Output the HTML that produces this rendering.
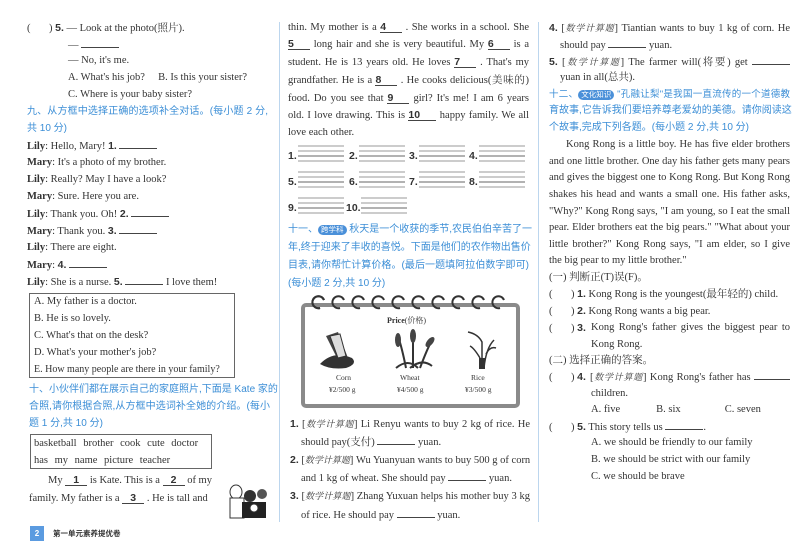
<!DOCTYPE html>
<html><head><meta charset="utf-8"><style>
*{margin:0;padding:0;box-sizing:border-box}
body{width:800px;height:548px;background:#fff;position:relative;overflow:hidden;font-family:"Liberation Serif","Noto Serif CJK SC",serif;color:#333;font-size:10.5px}
.l{position:absolute;white-space:nowrap;line-height:12px}
.j{text-align:justify;text-align-last:justify}
.b{color:#3b8ed6;font-family:"Liberation Sans","Noto Sans CJK SC",sans-serif;font-size:10px;text-align:justify;text-align-last:justify}
.n{font-family:"Liberation Sans",sans-serif;font-weight:bold}
.u{display:inline-block;border-bottom:1px solid #444;height:9px;vertical-align:baseline}
.a{display:inline-block;border-bottom:1px solid #444;text-align:center;font-family:"Liberation Sans",sans-serif;font-weight:bold;line-height:10px}
.tag{display:inline-block;background:#4a90d9;color:#fff;border-radius:5px;font-size:7.5px;padding:0 3px;line-height:10px}
.k{font-family:"Noto Serif CJK SC",serif;font-style:italic;font-size:9px}
.p{display:inline-block;width:22px}
.vl{position:absolute;top:22px;height:500px;width:1px;background:#bcd6ee}
</style></head><body>
<div class="vl" style="left:279px"></div>
<div class="vl" style="left:538px"></div>

<!-- column 1 -->
<div class="l" style="left:27px;top:22px"><span class="p">(</span>) <span class="n">5.</span> — Look at the photo(照片).</div>
<div class="l" style="left:68px;top:39px">— <span class="u" style="width:38px"></span></div>
<div class="l" style="left:68px;top:55px">— No, it's me.</div>
<div class="l" style="left:68px;top:72px">A. What's his job?&nbsp;&nbsp;&nbsp;&nbsp;&nbsp;B. Is this your sister?</div>
<div class="l" style="left:68px;top:89px">C. Where is your baby sister?</div>
<div class="l b" style="left:27px;top:106px;width:241px">九、从方框中选择正确的选项补全对话。(每小题 2 分,</div>
<div class="l b" style="left:27px;top:123px;text-align-last:auto">共 10 分)</div>
<div class="l" style="left:27px;top:140px"><b>Lily</b>: Hello, Mary! <span class="n">1.</span> <span class="u" style="width:38px"></span></div>
<div class="l" style="left:27px;top:157px"><b>Mary</b>: It's a photo of my brother.</div>
<div class="l" style="left:27px;top:174px"><b>Lily</b>: Really? May I have a look?</div>
<div class="l" style="left:27px;top:191px"><b>Mary</b>: Sure. Here you are.</div>
<div class="l" style="left:27px;top:208px"><b>Lily</b>: Thank you. Oh! <span class="n">2.</span> <span class="u" style="width:38px"></span></div>
<div class="l" style="left:27px;top:225px"><b>Mary</b>: Thank you. <span class="n">3.</span> <span class="u" style="width:38px"></span></div>
<div class="l" style="left:27px;top:242px"><b>Lily</b>: There are eight.</div>
<div class="l" style="left:27px;top:259px"><b>Mary</b>: <span class="n">4.</span> <span class="u" style="width:38px"></span></div>
<div class="l" style="left:27px;top:276px"><b>Lily</b>: She is a nurse. <span class="n">5.</span> <span class="u" style="width:38px"></span> I love them!</div>
<div style="position:absolute;left:29px;top:293px;width:206px;height:85px;border:1px solid #666"></div>
<div class="l" style="left:34px;top:296px">A. My father is a doctor.</div>
<div class="l" style="left:34px;top:313px">B. He is so lovely.</div>
<div class="l" style="left:34px;top:330px">C. What's that on the desk?</div>
<div class="l" style="left:34px;top:347px">D. What's your mother's job?</div>
<div class="l" style="left:34px;top:364px;font-size:10px">E. How many people are there in your family?</div>
<div class="l b" style="left:29px;top:384px;width:241px">十、小伙伴们都在展示自己的家庭照片,下面是 Kate 家的</div>
<div class="l b" style="left:29px;top:401px;width:241px">合照,请你根据合照,从方框中选词补全她的介绍。(每小</div>
<div class="l b" style="left:29px;top:418px;text-align-last:auto">题 1 分,共 10 分)</div>
<div style="position:absolute;left:30px;top:434px;width:182px;height:35px;border:1px solid #666"></div>
<div class="l" style="left:34px;top:438px;word-spacing:4px">basketball brother cook cute doctor</div>
<div class="l" style="left:34px;top:455px;word-spacing:4px">has my name picture teacher</div>
<div class="l" style="left:48px;top:475px">My <span class="a" style="width:22px">1</span> is Kate. This is a <span class="a" style="width:22px">2</span> of my</div>
<div class="l" style="left:29px;top:493px">family. My father is a <span class="a" style="width:22px">3</span> . He is tall and</div>
<svg style="position:absolute;left:224px;top:478px" width="48" height="42"><ellipse cx="12" cy="14" rx="6" ry="7" fill="#fff" stroke="#333"/><rect x="6" y="20" width="14" height="20" fill="#fff" stroke="#333"/><ellipse cx="26" cy="18" rx="6" ry="6" fill="#333"/><rect x="18" y="24" width="24" height="16" fill="#222"/><ellipse cx="38" cy="16" rx="5" ry="5" fill="#555"/><ellipse cx="30" cy="30" rx="4" ry="4" fill="#fff" stroke="#333"/></svg>
<div style="position:absolute;left:30px;top:526px;width:14px;height:15px;background:#5b9be0;color:#fff;font:bold 8px 'Liberation Sans';text-align:center;line-height:15px">2</div>
<div class="l" style="left:53px;top:528px;font-family:'Noto Sans CJK SC',sans-serif;font-size:7.5px;font-weight:bold;color:#333">第一单元素养提优卷</div>

<!-- column 2 -->
<div class="l j" style="left:288px;top:22px;width:241px">thin. My mother is a <span class="a" style="width:22px">4</span> . She works in a school. She</div>
<div class="l j" style="left:288px;top:39px;width:241px"><span class="a" style="width:22px">5</span> long hair and she is very beautiful. My <span class="a" style="width:22px">6</span> is a</div>
<div class="l j" style="left:288px;top:57px;width:241px">student. He is 13 years old. He loves <span class="a" style="width:22px">7</span> . That's my</div>
<div class="l j" style="left:288px;top:75px;width:241px">grandfather. He is a <span class="a" style="width:22px">8</span> . He cooks delicious(美味的)</div>
<div class="l j" style="left:288px;top:93px;width:241px">food. Do you see that <span class="a" style="width:22px">9</span> girl? It's me! I am 6 years</div>
<div class="l j" style="left:288px;top:110px;width:241px">old. I love drawing. This is <span class="a" style="width:28px">10</span> happy family. We all</div>
<div class="l" style="left:288px;top:127px">love each other.</div>
<div class="l n" style="left:288px;top:150px">1.</div><div class="l n" style="left:349px;top:150px">2.</div><div class="l n" style="left:409px;top:150px">3.</div><div class="l n" style="left:469px;top:150px">4.</div>
<div class="l n" style="left:288px;top:176px">5.</div><div class="l n" style="left:349px;top:176px">6.</div><div class="l n" style="left:409px;top:176px">7.</div><div class="l n" style="left:469px;top:176px">8.</div>
<div class="l n" style="left:288px;top:202px">9.</div><div class="l n" style="left:346px;top:202px">10.</div>
<svg style="position:absolute;left:298px;top:144px" width="232" height="76" stroke="#777" stroke-width="0.8">
<g id="g"><line x1="0" y1="2" x2="46" y2="2"/><line x1="0" y1="7" x2="46" y2="7"/><line x1="0" y1="12" x2="46" y2="12" stroke="#333"/><line x1="0" y1="17" x2="46" y2="17"/></g>
<use href="#g" x="61"/><use href="#g" x="121"/><use href="#g" x="181"/>
<use href="#g" y="26"/><use href="#g" x="61" y="26"/><use href="#g" x="121" y="26"/><use href="#g" x="181" y="26"/>
<use href="#g" y="52"/><use href="#g" x="63" y="52"/></svg>
<div class="l b" style="left:288px;top:224px;width:241px">十一、<span class="tag">跨学科</span> 秋天是一个收获的季节,农民伯伯辛苦了一</div>
<div class="l b" style="left:288px;top:242px;width:241px">年,终于迎来了丰收的喜悦。下面是他们的农作物出售价</div>
<div class="l b" style="left:288px;top:260px;width:241px">目表,请你帮忙计算价格。(最后一题填阿拉伯数字即可)</div>
<div class="l b" style="left:288px;top:278px;text-align-last:auto">(每小题 2 分,共 10 分)</div>
<div style="position:absolute;left:301px;top:303px;width:219px;height:105px;border:4px solid #8a8a8a;border-radius:5px;background:#fff"></div>
<svg style="position:absolute;left:310px;top:295px" width="200" height="18" fill="none" stroke="#333" stroke-width="2">
<g id="r"><path d="M10 13 A6 6 0 1 1 14 5"/></g>
<use href="#r" x="0"/><use href="#r" x="20"/><use href="#r" x="40"/><use href="#r" x="60"/><use href="#r" x="80"/><use href="#r" x="100"/><use href="#r" x="120"/><use href="#r" x="140"/><use href="#r" x="160"/><use href="#r" x="180"/></svg>
<div class="l" style="left:387px;top:315px;font-size:8px"><b>Price</b>(价格)</div>
<svg style="position:absolute;left:318px;top:328px" width="190" height="42">
<path d="M8 8 L20 4 L30 30 L22 36 Z" fill="#444"/><path d="M2 36 Q15 22 34 30 Q40 36 28 40 Q12 42 2 36Z" fill="#333"/><path d="M12 8 L22 6 L28 28 L20 30Z" fill="#ddd" stroke="#333"/>
<g stroke="#333" stroke-width="2" fill="none"><path d="M95 40 L95 10"/><path d="M88 40 Q84 20 80 8"/><path d="M102 40 Q108 24 112 16"/><path d="M78 40 Q90 30 100 40"/><path d="M92 40 Q104 30 114 38"/></g>
<g fill="#444"><ellipse cx="80" cy="12" rx="3" ry="7"/><ellipse cx="95" cy="8" rx="3" ry="7"/><ellipse cx="112" cy="14" rx="3" ry="6" transform="rotate(40 112 14)"/></g>
<g stroke="#333" stroke-width="1.5" fill="none"><path d="M164 40 L164 14 Q160 6 150 4"/><path d="M166 40 Q168 20 176 12"/><path d="M162 30 Q156 20 152 18"/><path d="M168 26 Q172 18 178 20"/></g><rect x="161" y="30" width="6" height="11" fill="#333"/>
</svg>
<div class="l" style="left:336px;top:372px;font-size:7.5px">Corn</div>
<div class="l" style="left:400px;top:372px;font-size:7.5px">Wheat</div>
<div class="l" style="left:471px;top:372px;font-size:7.5px">Rice</div>
<div class="l" style="left:329px;top:384px;font-size:7.5px">¥2/500 g</div>
<div class="l" style="left:397px;top:384px;font-size:7.5px">¥4/500 g</div>
<div class="l" style="left:465px;top:384px;font-size:7.5px">¥3/500 g</div>
<div class="l j" style="left:290px;top:418px;width:240px"><span class="n">1.</span> [<span class="k">数学计算题</span>] Li Renyu wants to buy 2 kg of rice. He</div>
<div class="l" style="left:301px;top:436px">should pay(支付) <span class="u" style="width:38px"></span> yuan.</div>
<div class="l j" style="left:290px;top:454px;width:240px"><span class="n">2.</span> [<span class="k">数学计算题</span>] Wu Yuanyuan wants to buy 500 g of corn</div>
<div class="l" style="left:301px;top:472px">and 1 kg of wheat. She should pay <span class="u" style="width:38px"></span> yuan.</div>
<div class="l j" style="left:290px;top:490px;width:240px"><span class="n">3.</span> [<span class="k">数学计算题</span>] Zhang Yuxuan helps his mother buy 3 kg</div>
<div class="l" style="left:301px;top:509px">of rice. He should pay <span class="u" style="width:38px"></span> yuan.</div>

<!-- column 3 -->
<div class="l j" style="left:549px;top:22px;width:241px"><span class="n">4.</span> [<span class="k">数学计算题</span>] Tiantian wants to buy 1 kg of corn. He</div>
<div class="l" style="left:560px;top:39px">should pay <span class="u" style="width:38px"></span> yuan.</div>
<div class="l j" style="left:549px;top:56px;width:241px"><span class="n">5.</span> [<span class="k">数学计算题</span>] The farmer will(将要) get <span class="u" style="width:38px"></span></div>
<div class="l" style="left:560px;top:72px">yuan in all(总共).</div>
<div class="l b" style="left:549px;top:89px;width:241px;font-size:9.5px">十二、<span class="tag">文化知识</span> "孔融让梨"是我国一直流传的一个道德教</div>
<div class="l b" style="left:549px;top:105px;width:241px">育故事,它告诉我们要培养尊老爱幼的美德。请你阅读这</div>
<div class="l b" style="left:549px;top:122px;text-align-last:auto">个故事,完成下列各题。(每小题 2 分,共 10 分)</div>
<div class="l j" style="left:566px;top:139px;width:224px">Kong Rong is a little boy. He has five elder brothers</div>
<div class="l j" style="left:549px;top:156px;width:241px">and one little brother. One day his father gets many pears</div>
<div class="l j" style="left:549px;top:172px;width:241px">and gives the biggest one to Kong Rong. But Kong Rong</div>
<div class="l j" style="left:549px;top:189px;width:241px">shakes his head and wants a small one. His father asks,</div>
<div class="l j" style="left:549px;top:206px;width:241px">"Why?" Kong Rong says, "I am young, so I eat the small</div>
<div class="l j" style="left:549px;top:222px;width:241px">pear. Elder brothers eat the big pears." "What about your</div>
<div class="l j" style="left:549px;top:239px;width:241px">little brother?" Kong Rong says, "I am elder, so I give</div>
<div class="l" style="left:549px;top:255px">the big pear to my little brother."</div>
<div class="l" style="left:549px;top:272px">(一) 判断正(T)误(F)。</div>
<div class="l" style="left:549px;top:288px"><span class="p">(</span>) <span class="n">1.</span> Kong Rong is the youngest(最年轻的) child.</div>
<div class="l" style="left:549px;top:305px"><span class="p">(</span>) <span class="n">2.</span> Kong Rong wants a big pear.</div>
<div class="l" style="left:549px;top:322px"><span class="p">(</span>) <span class="n">3.</span></div>
<div class="l j" style="left:591px;top:322px;width:199px">Kong Rong's father gives the biggest pear to</div>
<div class="l" style="left:591px;top:339px">Kong Rong.</div>
<div class="l" style="left:549px;top:355px">(二) 选择正确的答案。</div>
<div class="l" style="left:549px;top:371px"><span class="p">(</span>) <span class="n">4.</span></div>
<div class="l j" style="left:590px;top:371px;width:200px">[<span class="k">数学计算题</span>] Kong Rong's father has <span class="u" style="width:36px"></span></div>
<div class="l" style="left:591px;top:388px">children.</div>
<div class="l" style="left:591px;top:404px">A. five<span style="display:inline-block;width:36px"></span>B. six<span style="display:inline-block;width:44px"></span>C. seven</div>
<div class="l" style="left:549px;top:421px"><span class="p">(</span>) <span class="n">5.</span> This story tells us <span class="u" style="width:38px"></span>.</div>
<div class="l" style="left:591px;top:437px">A. we should be friendly to our family</div>
<div class="l" style="left:591px;top:454px">B. we should be strict with our family</div>
<div class="l" style="left:591px;top:471px">C. we should be brave</div>
</body></html>
